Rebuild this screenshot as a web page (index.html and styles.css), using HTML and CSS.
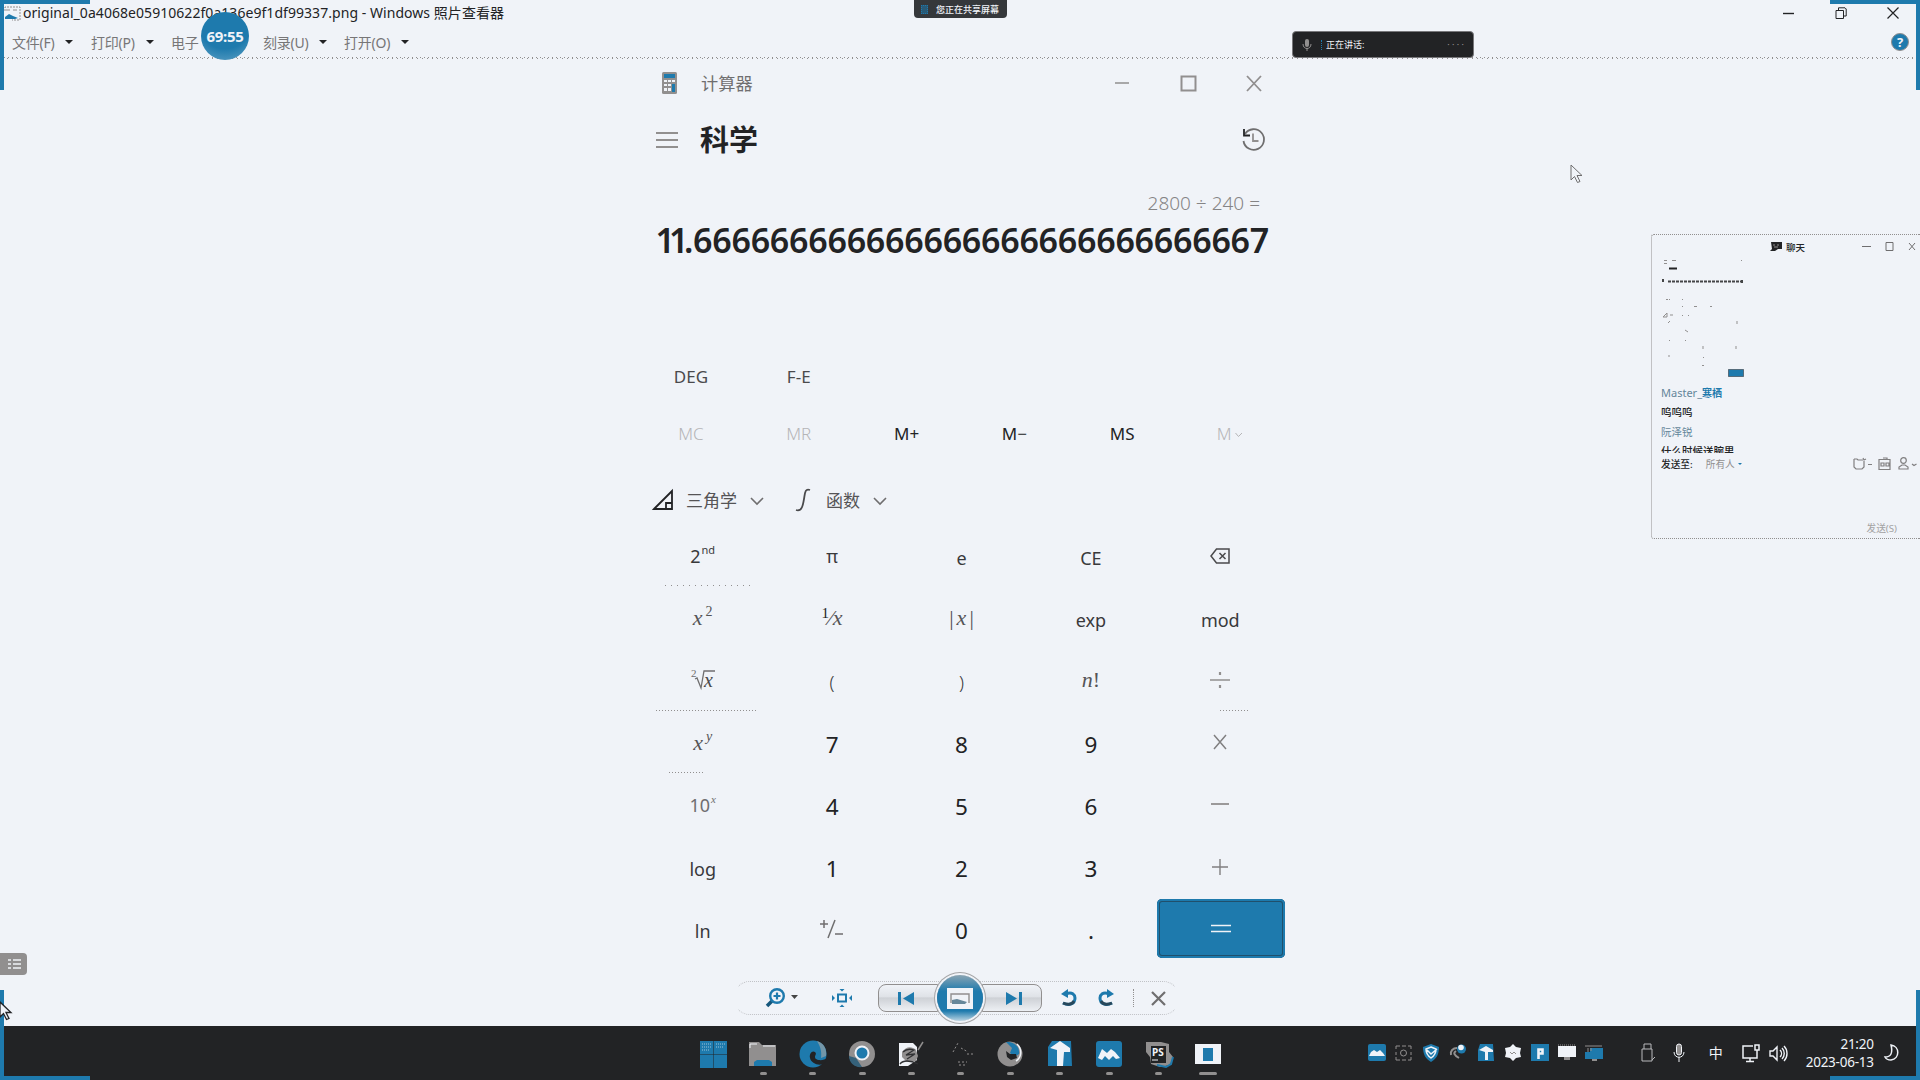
FILE: index.html
```html
<!DOCTYPE html>
<html lang="zh-CN">
<head>
<meta charset="utf-8">
<title>Windows 照片查看器</title>
<link rel="stylesheet" href="styles.css">
</head>
<body>
<div class="desktop">
  <header class="titlebar">
    <svg class="app-icon" width="17" height="16" viewBox="0 0 17 16"><path d="M1 5V1h15v13H8" fill="none" stroke="#918f8f" stroke-dasharray="2 1"/><path d="M1 11l4-3 4 2 5 2-3 1H1z" fill="#1e7aad"/><path d="M2 4h4M9 4h4" stroke="#918f8f"/></svg>
    <span class="file-name">original_0a4068e05910622f0a136e9f1df99337.png - Windows 照片查看器</span>
    <div class="window-buttons">
      <svg width="12" height="12"><path d="M0 6.500h11" stroke="#222325" stroke-width="1.400"/></svg>
      <svg width="12" height="12" fill="none" stroke="#222325"><path d="M1 3.500h7.500v8h-7.500zM3.500 3V.8h6.500l1.200 1.200V9H9"/></svg>
      <svg width="12" height="12"><path d="M.5.5l11 11M11.500.5l-11 11" stroke="#222325" stroke-width="1.200"/></svg>
    </div>
  </header>
  <nav class="menubar">
    <span class="menu w79">文件(F)<i></i></span>
    <span class="menu w80">打印(P)<i></i></span>
    <span class="menu w92">电子</span>
    <span class="menu w81">刻录(U)<i></i></span>
    <span class="menu">打开(O)<i></i></span>
    <span class="help">?</span>
  </nav>

  <main class="stage">
    <section class="calculator">
      <div class="calc-title">
        <svg width="17" height="22" viewBox="0 0 17 22"><rect x="1" width="15" height="22" rx="1.500" fill="#918f8f"/><path d="M3 2h11v4H3z" fill="#1e7aad"/><path d="M3 8h3v2H3zm4 0h3v2H7zm4 0h3v2h-3zM3 12h3v2H3zm4 0h3v2H7zM3 16h3v3H3zm4 0h3v3H7z" fill="#f0f3f8"/><path d="M11 12h3v8h-3z" fill="#1e7aad"/></svg>
        <span>计算器</span>
        <svg class="calc-win" width="148" height="18" fill="none" stroke="#918f8f" stroke-width="1.500"><path d="M1 9h14"/><path d="M67.500 2.500h14v14h-14z" stroke-width="2"/><path d="M133 2l14 15M147 2l-14 15" stroke-width="1.800"/></svg>
      </div>
      <div class="calc-nav">
        <svg width="22" height="18"><path d="M0 2h22M0 9h22M0 16h22" stroke="#918f8f" stroke-width="2"/></svg>
        <h1>科学</h1>
        <svg class="history" width="26" height="26" viewBox="0 0 26 26" fill="none" stroke="#6f6e6f" stroke-width="1.800"><path d="M4 7A10.300 10.300 0 1 1 2.500 14"/><path d="M3 2v6.500h6" stroke="#222325"/><path d="M12 6.500V14h5.500" stroke="#918f8f"/></svg>
      </div>
      <div class="expression">2800 ÷ 240 =</div>
      <div class="result"><span class="one">1</span><span class="one second">1</span>.66666666666666666666666666666<span>7</span></div>
      <div class="mode-row"><span>DEG</span><span>F-E</span></div>
      <div class="memory-row"><span class="off">MC</span><span class="off">MR</span><span>M+</span><span>M−</span><span>MS</span><span class="off">M<svg width="8" height="6" fill="none" stroke="#b5b5b7"><path d="M.5 1l3 3.500L7 1"/></svg></span></div>
      <div class="function-row">
        <svg width="22" height="22" fill="none" stroke="#222325" stroke-width="1.800"><path d="M2 20L20 2v18zM14 20v-6h6"/></svg>
        <span class="trig">三角学</span>
        <svg class="chev" width="14" height="8" fill="none" stroke="#6f6e6f" stroke-width="1.600"><path d="M1 1l6 6 6-6"/></svg>
        <svg class="fn-icon" width="16" height="24" fill="none" stroke="#4a4a4c" stroke-width="1.800"><path d="M15 2c-5-2-5 3-6 9s-2 13-8 11"/></svg>
        <span class="func">函数</span>
        <svg class="chev" width="14" height="8" fill="none" stroke="#6f6e6f" stroke-width="1.600"><path d="M1 1l6 6 6-6"/></svg>
      </div>
      <div class="keypad">
        <div class="key up edge e1">2<sup>nd</sup></div><div class="key up">π</div><div class="key">e</div><div class="key">CE</div>
        <div class="key up"><svg width="21" height="16" fill="none" stroke="#4a4a4c" stroke-width="1.500"><path d="M6.500 1H19v14H6.500L1 8zM9.500 5l6 6M15.500 5l-6 6"/></svg></div>

        <div class="key math"><em>x</em><sup class="wide">2</sup></div><div class="key math"><small class="num">1</small>⁄<em>x</em></div><div class="key math abs">|<em>x</em>|</div><div class="key">exp</div><div class="key">mod</div>

        <div class="key math edge e2"><svg width="24" height="24" viewBox="0 0 24 24" fill="none" stroke="#6f6e6f" stroke-width="1.300"><path d="M4 11l2-1 4 10 3-17h11"/><text class="root-n" x="0" y="9">2</text><text class="root-x" x="13" y="19">x</text></svg></div><div class="key paren">(</div><div class="key paren">)</div><div class="key math"><em>n</em>!</div>
        <div class="key up edge e3"><svg width="20" height="18" fill="none" stroke="#918f8f" stroke-width="1.500"><path d="M0 9h20"/><path d="M10 1v3M10 14v3" stroke-width="2.200"/></svg></div>

        <div class="key math edge e4"><em>x</em><sup class="wide"><em>y</em></sup></div><div class="key digit">7</div><div class="key digit">8</div><div class="key digit">9</div>
        <div class="key up"><svg width="14" height="14"><path d="M1 0l12 14M13 0L1 14" stroke="#807f80" stroke-width="1.500"/></svg></div>

        <div class="key ten">10<sup><em>x</em></sup></div><div class="key digit">4</div><div class="key digit">5</div><div class="key digit">6</div>
        <div class="key up"><svg width="18" height="8"><path d="M0 4h18" stroke="#918f8f" stroke-width="1.800"/></svg></div>

        <div class="key">log</div><div class="key digit">1</div><div class="key digit">2</div><div class="key digit">3</div>
        <div class="key up"><svg width="16" height="16"><path d="M0 8h16M8 0v16" stroke="#807f80" stroke-width="1.400"/></svg></div>

        <div class="key">ln</div>
        <div class="key"><svg class="lift" width="24" height="20" fill="none" stroke="#6f6e6f" stroke-width="1.500"><path d="M0 5h8M4 1v8M15 1L8 19M15 15h8"/></svg></div>
        <div class="key digit">0</div><div class="key digit">.</div>
        <div class="key equals"><svg width="20" height="9"><path d="M0 1.500h20M0 7.500h20" stroke="#f0f3f8" stroke-width="1.500"/></svg></div>
      </div>
    </section>

    <aside class="chat">
      <div class="chat-head">
        <svg width="12" height="10"><path d="M1 0h11v7H8L5 9H0l2-2z" fill="#222325"/><path d="M3 3h2M7 3h2M4 5h4" stroke="#918f8f"/></svg>
        <span>聊天</span>
        <svg class="chat-win" width="54" height="9" fill="none" stroke="#6f6e6f"><path d="M0 4.500h9M24 .5h7v8h-7zM47 1l6 7M53 1l-6 7"/></svg>
      </div>
      <svg class="chat-thumb" width="86" height="122" viewBox="0 0 86 122" fill="none" stroke="#918f8f">
        <path d="M1 2.500h3M1 5.500h3M9 2.500h4M78 2.500h1"/><path d="M6 10.500h8" stroke="#222325" stroke-width="2"/>
        <path d="M0 21v4M5 23.500h75M79 22v3" stroke="#444547" stroke-dasharray="3 1" stroke-width="2"/>
        <path d="M3 41.500h2M6 41.500h1M19 41.500h1M19 48.500h1M31 48.500h3M47 48.500h2M0 59l4-4v4zM7 57h3M19 57.500h1M25 57.500h1M5 65l2-2M74 63v3M22 72l3 2M6 82.500h1M22 82.500h1M40 88v3M73 88v3M5 98h2M40 99.500h1M39 107.500h2" />
        <rect x="65.500" y="111.500" width="15" height="7" fill="#1e7aad" stroke="#222325" stroke-dasharray="1 1"/>
      </svg>
      <div class="line user">Master_<b>寒栖</b></div>
      <div class="line text">呜呜呜</div>
      <div class="line user faint">阮泽锐</div>
      <div class="line text clipped">什么时候送腕男</div>
      <div class="send-to">
        <span class="to">发送至:</span><span class="everyone">所有人<i></i></span>
        <svg width="64" height="14" fill="none" stroke="#807f80" stroke-width="1.200"><path d="M1 2h3l1 1h5M1 2v8l2 2h6l2-2V4M10 1l1 2 2-1M15 7.500h4M26 2.500h11v10H26zM30 1h4v2M28 6h3v3h-3zM33 6h3v3h-3z"/><circle cx="50.500" cy="3.500" r="2.800"/><path d="M46 12v-2l3-2h3l3 2v2zM59 7l2 1.500L63.500 7"/></svg>
      </div>
      <div class="send">发送(S)</div>
    </aside>
  </main>

  <div class="viewer-controls">
    <div class="controls">
      <svg class="c-zoom" width="31" height="20" fill="none"><path d="M1 18l5-5" stroke="#15577c" stroke-width="3.500"/><circle cx="11" cy="8" r="6.800" stroke="#1e7aad" stroke-width="2.400"/><path d="M7.500 8h7M11 4.500v7" stroke="#1e7aad" stroke-width="2.200"/><path d="M25 7h7l-3.500 4z" fill="#444"/></svg>
      <svg class="c-fit" width="20" height="18" fill="#1e7aad"><rect x="6" y="5.500" width="8" height="7" fill="none" stroke="#1e7aad" stroke-width="2"/><path d="M7.500 0h5L10 2.500zM7.500 18h5L10 15.500zM0 6v6l3-3zM20 6v6l-3-3z"/></svg>
      <div class="transport">
        <div class="pill left"><svg width="17" height="13" fill="#1e7aad"><path d="M0 0h3v13H0zM16 0v13L5 6.500z"/></svg></div>
        <div class="play"><svg width="26" height="21"><path d="M0 0h26v21H0z" fill="#f0f3f8"/><path d="M4 15V6h18v9" fill="none" stroke="#918f8f" stroke-width="1.400"/><path d="M5 12l5-1 10 3-2 2H5z" fill="#65879a"/></svg></div>
        <div class="pill right"><svg width="17" height="13" fill="#1e7aad"><path d="M14 0h3v13h-3zM1 0v13l11-6.500z"/></svg></div>
      </div>
      <svg class="c-undo" width="16" height="18" fill="none" stroke="#1e7aad" stroke-width="3"><path d="M5 5c6-3 9 1 9 4 0 6-6 8-12 5"/><path d="M13 12c-2 4-7 4-11 2" stroke="#28485b"/><path d="M0 5l7-5v9z" fill="#1e7aad" stroke="none"/></svg>
      <svg class="c-redo" width="16" height="18" fill="none" stroke="#1e7aad" stroke-width="3"><path d="M11 5C5 2 2 6 2 9c0 6 6 8 12 5"/><path d="M3 12c2 4 7 4 11 2" stroke="#28485b"/><path d="M16 5L9 0v9z" fill="#1e7aad" stroke="none"/></svg>
      <span class="divider"></span>
      <svg class="c-del" width="15" height="15"><path d="M1 1l13 13M14 1L1 14" stroke="#6f6e6f" stroke-width="2.200"/></svg>
    </div>
  </div>

  <footer class="taskbar">
    <div class="apps">
      <span class="app"><svg width="28" height="28"><path d="M0 1h13.500v13H0zM14 1h13v13H14zM0 14.500h13.500V28H0zM14 14.500h13V28H14z" fill="#1e7aad"/><path d="M2 4h9M2 7h9M2 10h7M16 4h9M16 7h7" stroke="#9cc3da" stroke-dasharray="1 1"/></svg></span>
      <span class="app run"><svg width="28" height="28"><path d="M0 2h10l3 3h14v21H0z" fill="#918f8f"/><path d="M1 8V4h7M14 6h12" fill="none" stroke="#f0f3f8"/><path d="M5 26v-4l3-2h12l3 2v4z" fill="#1e7aad"/></svg></span>
      <span class="app run"><svg width="28" height="28"><circle cx="14" cy="14" r="13.500" fill="#1e7aad"/><path d="M18 1c7 2 10 8 9 15l-5 2c1-7-1-12-4-17z" fill="#7396a8"/><path d="M28 18c-3 3-12 3-12-1 0-2 2-3 0-5-3-2-6 2-5 6 1 5 8 8 13 6l4-3z" fill="#222325"/></svg></span>
      <span class="app run"><svg width="28" height="28"><circle cx="14" cy="14" r="13" fill="#918f8f"/><path d="M1 16l7 2 6 9C7 28 1 23 1 16z" fill="#35617a"/><circle cx="14" cy="13" r="6.500" fill="#1e7aad" stroke="#f0f3f8" stroke-width="2"/></svg></span>
      <span class="app run"><svg width="28" height="28"><path d="M2 3h14l4 4v13l-9 6H2z" fill="#f0f3f8"/><path d="M5 12c4-6 10-6 14-2l2 6-2 5-9 1-5-5z" fill="#918f8f"/><path d="M6 12c4-4 8-3 11-2L9 15l9-1-8 5M3 24c3-4 10-4 18 0" fill="none" stroke="#303133" stroke-width="1.300"/><path d="M26 2l-5 8" stroke="#918f8f" stroke-width="1.500"/></svg></span>
      <span class="app run"><svg width="28" height="28" fill="none" stroke="#918f8f" stroke-dasharray="2 2"><path d="M6 12l5-9M14 8l7 4M20 14h7M11 22h9M12 25h7"/></svg></span>
      <span class="app run"><svg width="28" height="28"><circle cx="14" cy="14" r="12.500" fill="#918f8f"/><path d="M10 2c8-1 14 5 13 12l-5 3-4-4 2-5z" fill="#1e7aad"/><path d="M21 4c6 6 4 14-1 17" fill="none" stroke="#f0f3f8" stroke-width="1.500"/><path d="M10 11l4 3h6l1 4-6 2-4-3z" fill="#222325"/></svg></span>
      <span class="app run"><svg width="28" height="28"><path d="M6 1h19l1 25H2V7z" fill="#1e7aad"/><path d="M4 8l10-7 10 7v4h-6l-1 14h-6V10z" fill="#f0f3f8"/></svg></span>
      <span class="app run"><svg width="28" height="28"><rect x="1" y="1" width="26" height="26" rx="3" fill="#1e7aad"/><path d="M3 18l4-9 5 4 4-4 4 3 5 6-4 1-3-3-4 4-4-4-3 4z" fill="#f0f3f8"/></svg></span>
      <span class="app run"><svg width="28" height="28"><path d="M1 2h15l8 2v8l4 5-3 8-10 2-9-3-1-7-4-5z" fill="#918f8f"/><path d="M12 25l9 2 5-3 2-7" fill="none" stroke="#1e7aad" stroke-width="2"/><path d="M6 6h15v17H6z" fill="#222325"/><text class="ps" x="7" y="16">PS</text><path d="M7 20h6" stroke="#f0f3f8"/></svg></span>
      <span class="app active"><svg width="28" height="28"><path d="M1 4h26v20H1z" fill="#f0f3f8"/><path d="M9 8h10v13H9z" fill="#1e7aad"/></svg></span>
    </div>
    <div class="tray">
      <svg width="20" height="20"><rect x="1" y="1" width="18" height="17" rx="2" fill="#1e7aad"/><path d="M2 13l2-4 3-2 3 2 3-2 3 3 2 3z" fill="#f0f3f8"/></svg>
      <svg width="20" height="20" fill="none" stroke="#918f8f"><path d="M2 6V3h4M14 3h3v3M17 14v3h-3M6 17H2v-3M8 3h4M8 17h4M2 9v3M17 9v3"/><circle cx="9.500" cy="10" r="3"/></svg>
      <svg width="20" height="20"><path d="M10 1l8 3c0 8-3 12-8 15C5 16 2 12 2 4z" fill="#1e7aad"/><path d="M10 4l5 2c0 5-2 7-5 9-3-2-5-4-5-9zM6 7l4 4 6-5" fill="none" stroke="#f0f3f8" stroke-width="1.500"/></svg>
      <svg width="20" height="20"><path d="M9 5C5 5 2 8 3 12M8 8c-3 2-2 4 3 7" fill="none" stroke="#918f8f" stroke-width="2"/><circle cx="13.500" cy="6" r="4.500" fill="#1e7aad"/><circle cx="13" cy="4.500" r="2.800" fill="#f0f3f8"/></svg>
      <svg width="20" height="20"><path d="M4 1h13l1 17H2V7z" fill="#1e7aad"/><path d="M3 7l7-4 7 4v2h-5v8H9V9z" fill="#f0f3f8"/></svg>
      <svg width="20" height="20"><path d="M10 1l3 3 5 1-1 5 1 4-5 1-3 3-3-3-5-1 1-4-1-5 5-1z" fill="#f0f3f8"/><path d="M7 9l2 2 2-2 2 2" fill="none" stroke="#918f8f"/></svg>
      <svg width="20" height="20"><path d="M1 1h18v17H1z" fill="#1e7aad"/><path d="M8.500 16V6.500h4v4h-4" fill="none" stroke="#f0f3f8" stroke-width="2.600"/></svg>
      <svg width="20" height="20"><path d="M1 3h18v11H1z" fill="#f0f3f8"/><path d="M7 14h6v3H7z" fill="#918f8f"/><path d="M1 2h18" stroke="#918f8f" stroke-dasharray="1 1"/></svg>
      <svg width="20" height="20"><path d="M6 5h13v11H1V9h5z" fill="#1e7aad"/><path d="M1 3h17M4 5v4M7 5v3" stroke="#918f8f"/><path d="M8 16h5v2H8z" fill="#918f8f"/></svg>
    </div>
    <div class="system">
      <svg class="s-usb" width="14" height="20" fill="none" stroke="#b9babd"><path d="M3 6V1h7v5M1 6h10v12H1zM11 17l3-3"/></svg>
      <svg class="s-mic" width="12" height="20" fill="none" stroke="#f0f3f8"><rect x="3.500" y="1" width="5" height="11" rx="2.500" fill="#918f8f"/><path d="M1 9c0 7 10 7 10 0M6 14v5"/></svg>
      <span class="s-ime">中</span>
      <svg class="s-net" width="18" height="19" fill="none" stroke="#f0f3f8" stroke-width="1.500"><path d="M11 2H1v12h14V9M8 14v3M4 17.500h8M13 1h4v5h-4zM15 6v4"/></svg>
      <svg class="s-vol" width="18" height="17" fill="none" stroke="#f0f3f8" stroke-width="1.400"><path d="M1 6h3l4-4v13l-4-4H1zM11 5c2 2 2 5 0 7M13 3c3 3 3 8 0 11M15 1c4 4 4 11 0 15"/></svg>
      <div class="clock"><span>21:20</span><span>2023-06-13</span></div>
      <svg class="s-moon" width="15" height="18" fill="none" stroke="#f0f3f8" stroke-width="1.500"><path d="M7 1c9 1 9 14 0 15-3 0-5-1-6-3 6 0 8-4 6-12z"/></svg>
    </div>
  </footer>

  <div class="timer">69:55</div>
  <div class="share-pill"><i></i>您正在共享屏幕</div>
  <div class="talk-pill"><svg width="9" height="12"><rect x="3" width="4" height="8" rx="2" fill="#918f8f"/><path d="M1 5c0 6 8 6 8 0M5 9v3" fill="none" stroke="#918f8f"/></svg><i></i><span>正在讲话:</span><b>· · · ·</b></div>
  <div class="side-tab"><svg width="13" height="12"><path d="M0 2h3M5 2h8M0 6h3M5 6h8M0 10h3M5 10h8" stroke="#f0f3f8" stroke-width="1.500"/></svg></div>
  <i class="corner tl"></i><i class="corner tr"></i><i class="corner bl"></i><i class="corner br"></i>
  <svg class="pointer p1" width="14" height="20" viewBox="0 0 14 20"><path d="M1 1v15l3.500-3.500 3 6 2.500-1-3-6h5z" fill="#f0f3f8" stroke="#6f6e6f"/></svg>
  <svg class="pointer p2" width="14" height="20" viewBox="0 0 14 20"><path d="M1 1v15l3.500-3.500 3 6 2.500-1-3-6h5z" fill="#f0f3f8" stroke="#222325" stroke-width="1.300"/></svg>
</div>
</body>
</html>
```
FILE: styles.css
```css
:root { --bg: #f0f3f8; --blue: #1e7aad; --gray: #918f8f; --dark: #222325; }
* { box-sizing: border-box; }
body { margin: 0; background: var(--bg); color: var(--dark); font-family: "Noto Sans", "Noto Sans CJK SC", sans-serif; }
svg { display: block; flex: none; overflow: visible; }
.desktop { position: relative; width: 1920px; height: 1080px; overflow: hidden; display: flex; flex-direction: column; }

.titlebar { height: 28px; flex: none; display: flex; align-items: center; padding: 0 21px 3px 4px; font-size: 14px; }
.app-icon { margin: 2px 2px 0 0; }
.file-name { white-space: pre; line-height: 26px; letter-spacing: 0.050px; }
.window-buttons { margin-left: auto; display: flex; gap: 40px; }

.menubar { height: 31px; flex: none; display: flex; align-items: center; padding: 0 11px 4px 12px; font-size: 14px; color: #777677; background: linear-gradient(90deg, var(--gray) 1px, transparent 1px) 0 29px / 4px 1px repeat-x, linear-gradient(90deg, var(--gray) 1px, transparent 1px) 2px 30px / 5px 1px repeat-x; }
.menu { display: flex; align-items: center; gap: 11px; letter-spacing: -0.250px; white-space: nowrap; }
.menu i, .everyone i { border: 4px solid transparent; border-top-color: var(--dark); border-bottom: 0; }
.w79 { width: 79px; } .w80 { width: 80px; } .w92 { width: 92px; } .w81 { width: 81px; }
.help { margin-left: auto; width: 18px; height: 18px; border-radius: 50%; border: 1px solid var(--gray); background: var(--blue); color: var(--bg); font: bold 13px/16px "Noto Sans", sans-serif; text-align: center; }

.stage { height: 909px; flex: none; display: flex; align-items: flex-start; padding-left: 637px; }
.calculator { width: 647px; }
.calc-title { height: 49px; display: flex; align-items: center; padding: 0 22px 2px 24px; font-size: 17.200px; color: #6f6e6f; }
.calc-title span { margin-left: 23px; }
.calc-win { margin-left: auto; }
.calc-nav { height: 64px; display: flex; align-items: center; padding: 0 17px 0 19px; }
.calc-nav h1 { margin: 0 auto 0 22px; font-size: 29px; line-height: 40px; font-weight: 700; }
.expression { height: 64px; padding: 17px 24px 0 0; text-align: right; font-size: 19px; line-height: 28px; font-weight: 300; color: #858485; }
.result { height: 90px; margin: -16px 15px 0 0; text-align: right; font-size: 34px; line-height: 40px; font-weight: 600; letter-spacing: -0.250px; white-space: nowrap; }
.result .one { letter-spacing: -6px; }
.result .second { letter-spacing: -4.500px; }
.mode-row, .memory-row { display: grid; grid-template-columns: repeat(6, 1fr); text-align: center; font-size: 17px; align-items: center; color: #4a4a4c; }
.mode-row { height: 56px; margin-top: 38px; }
.memory-row { height: 58px; color: var(--dark); }
.memory-row .off { color: #b5b5b7; font-weight: 300; }
.off svg { display: inline-block; margin: 0 0 2px 4px; }
.function-row { height: 63px; padding: 12px 0 0 15px; display: flex; align-items: center; font-size: 17px; color: #555456; }
.trig { margin: 0 13px 0 12px; }
.func { margin: 0 13px 0 15px; }
.chev { margin-top: 3px; }
.fn-icon { margin-left: 31px; }

.keypad { display: grid; grid-template-columns: repeat(5, 1fr); grid-auto-rows: 62.200px; padding-left: 1px; margin-right: -1px; }
.key { position: relative; display: flex; align-items: center; justify-content: center; padding-top: 3px; font-size: 18px; color: #39393b; }
.key sup { font-size: 11px; line-height: 1; align-self: center; margin: -12px 0 0 1px; font-weight: 400; }
.key.up { padding: 0 0 1px; }
.key.digit { font-size: 22.500px; color: var(--dark); padding-top: 3px; }
.key.math { font-family: "Liberation Serif", serif; font-size: 22px; color: #555456; padding: 0; }
.key.math .wide { margin-left: 3px; font-size: 14px; }
.key.math .num { font-size: 15px; margin-top: -10px; color: var(--dark); }
.key.abs { gap: 3px; }
.key.ten { padding: 0; color: #6f6e6f; }
.ten em { font-family: "Liberation Serif", serif; }
.key.paren { font-weight: 300; padding-top: 4px; }
.root-n { font: 11px "Liberation Serif", serif; fill: #6f6e6f; stroke: none; }
.root-x { font: italic 20px "Liberation Serif", serif; fill: #4a4a4c; stroke: none; }
.lift { margin-top: -4px; }
.edge::after { content: ""; position: absolute; height: 1px; bottom: 1px; background: repeating-linear-gradient(90deg, var(--gray) 0 1px, transparent 1px 3px); }
.e1::after { left: 27px; width: 90px; background: repeating-linear-gradient(90deg, var(--gray) 0 1px, transparent 1px 6px); }
.e2::after { left: 18px; width: 100px; }
.e3::after { left: 64px; width: 28px; }
.e4::after { left: 31px; width: 34px; }
.key.equals { margin: 1px 0 2px 1px; padding: 0; background: var(--blue); border-radius: 5px; box-shadow: inset 0 0 0 2px var(--blue), inset 0 0 0 3px #20506c; }

.chat { width: 269px; height: 305px; margin: 175px 0 0 auto; border: 1px dotted var(--gray); border-right: 0; border-radius: 3px 0 0 3px; padding-left: 9px; font-size: 10px; display: flex; flex-direction: column; }
.chat-head { height: 23px; flex: none; display: flex; align-items: center; padding: 0 4px 0 109px; font-size: 9.500px; font-weight: 500; }
.chat-head span { margin-left: 4px; }
.chat-win { margin-left: auto; }
.chat-thumb { margin: 0 0 2px 2px; }
.line { height: 19.800px; line-height: 19.800px; flex: none; font-size: 10.500px; font-weight: 500; }
.line.user { color: #64869a; font-weight: 400; margin-top: 1px; font-size: 11px; }
.line.user b { color: var(--blue); font-size: 10px; }
.line.user.faint { margin-top: 0; font-size: 10.500px; }
.line.clipped { height: 11px; overflow: hidden; }
.send-to { height: 22px; flex: none; display: flex; align-items: center; padding-right: 3px; }
.send-to .to { font-size: 9.700px; font-weight: 500; }
.everyone { margin-left: 13px; font-size: 9.700px; color: var(--gray); display: flex; align-items: center; gap: 3px; }
.everyone i { border-width: 2px; border-bottom: 0; border-top-color: var(--blue); }
.send-to svg { margin-left: auto; }
.send { margin: auto 23px 3px auto; font-size: 9.700px; color: #a3a2a3; }

.viewer-controls { height: 58px; flex: none; padding-left: 733px; }
.controls { width: 447px; height: 34px; margin-top: 13px; padding-left: 32px; display: flex; align-items: center; border: 1px dotted #b5b5b7; border-color: #c0c2c6 transparent; border-radius: 17px; }
.c-fit { margin-left: 35px; }
.transport { margin-left: 26px; display: flex; align-items: center; width: 165px; height: 28px; }
.pill { width: 60px; height: 28px; border: 1.500px solid var(--gray); display: flex; align-items: center; background: linear-gradient(#f0f3f8, #dfe2e7 45%, #ced1d6 50%, #edf0f4); }
.pill.left { border-radius: 8px 0 0 8px; padding-left: 19px; }
.pill.right { border-radius: 0 8px 8px 0; padding-left: 22px; }
.play { width: 46px; height: 46px; margin: -4px -1px; flex: none; border-radius: 50%; z-index: 1; display: flex; align-items: center; justify-content: center; background: linear-gradient(#8aa4b3, var(--blue) 35%, var(--blue) 78%, #bcd5e3); box-shadow: 0 0 0 2px var(--bg), 0 0 0 3px #a5a5a7; }
.c-undo { margin-left: 18px; }
.c-redo { margin-left: 21px; }
.divider { height: 18px; margin-left: 19px; border-left: 1px dotted var(--gray); }
.c-del { margin-left: 17px; }

.taskbar { height: 54px; flex: none; background: var(--dark); color: var(--bg); display: flex; }
.apps { margin-left: 689px; display: flex; }
.app { width: 49.450px; height: 54px; padding-top: 14px; display: flex; flex-direction: column; align-items: center; }
.run::after, .active::after { content: ""; width: 7px; height: 3px; margin-top: 4px; border-radius: 2px; background: var(--gray); }
.active::after { width: 18px; }
.ps { font: bold 10px "Noto Sans", sans-serif; fill: #f0f3f8; }
.tray { margin-left: 134.500px; padding-top: 17px; display: flex; gap: 7.050px; }
.system { height: 54px; display: flex; align-items: center; margin-left: 37px; }
.s-mic { margin-left: 18px; }
.s-ime { width: 16px; margin-left: 24px; font-size: 14px; line-height: 20px; }
.s-net { margin-left: 17px; }
.s-vol { margin-left: 9px; }
.clock { width: 87px; display: flex; flex-direction: column; text-align: right; font-size: 13.500px; line-height: 18px; white-space: nowrap; letter-spacing: -0.250px; }
.s-moon { margin-left: 10px; }

.timer { position: absolute; left: 201px; top: 12px; width: 48px; height: 48px; border-radius: 50%; background: radial-gradient(circle at 50% 20%, var(--blue) 60%, #5fa1c5); color: var(--bg); font-weight: 700; font-size: 15px; line-height: 48px; text-align: center; letter-spacing: -0.300px; }
.share-pill { position: absolute; left: 914px; top: 0; width: 93px; height: 18px; border-radius: 0 0 4px 4px; background: #35383b; color: var(--bg); font-size: 9px; line-height: 17px; display: flex; align-items: center; gap: 8px; padding-left: 7px; white-space: nowrap; font-weight: 500; }
.share-pill i { width: 7px; height: 9px; border: 1px dotted var(--blue); background: #285a77; }
.talk-pill { position: absolute; left: 1292px; top: 31px; width: 182px; height: 27px; border: 1px solid #77777a; border-radius: 4px; background: var(--dark); color: var(--bg); font-size: 9px; display: flex; align-items: center; padding: 0 9px; }
.talk-pill i { height: 10px; margin: 0 4px 0 10px; border-left: 1px dotted var(--blue); }
.talk-pill b { margin-left: auto; color: var(--gray); font-weight: 400; }
.side-tab { position: absolute; left: 0; top: 953px; width: 27px; height: 22px; border-radius: 0 4px 4px 0; background: var(--gray); display: flex; align-items: center; padding-left: 8px; }
.corner { position: absolute; width: 90px; height: 90px; border: 0 solid var(--blue); }
.tl { left: 0; top: 0; border-width: 4px 0 0 4px; }
.tr { right: 0; top: 0; border-width: 4px 4px 0 0; }
.bl { left: 0; bottom: 0; border-width: 0 0 4px 4px; }
.br { right: 0; bottom: 0; border-width: 0 4px 4px 0; }
.pointer { position: absolute; }
.p1 { left: 1570px; top: 164px; }
.p2 { left: -1px; top: 1001px; }
```
